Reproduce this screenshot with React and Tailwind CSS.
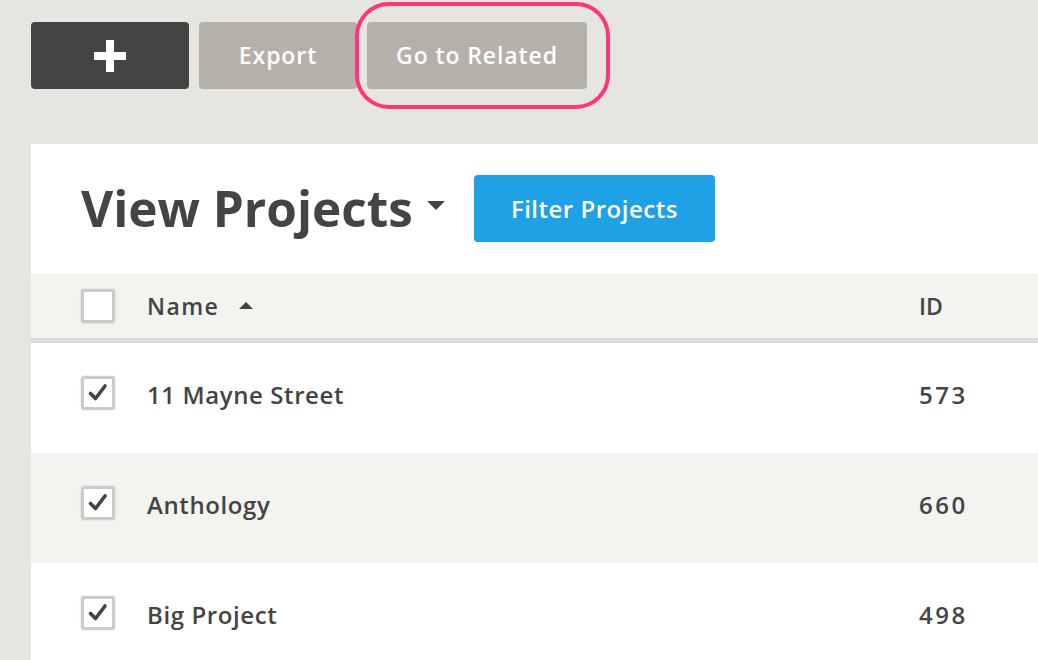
import React from "react";

function Check() {
  return (
    <svg width="24" height="24" viewBox="0 0 24 24" className="block">
      <path d="M4.5 12.5 L9.5 17.5 L19 5" fill="none" stroke="#444" strokeWidth="3.6" strokeLinecap="round" strokeLinejoin="round" />
    </svg>
  );
}

function Box({ checked }) {
  return (
    <div className="w-[34px] h-[34px] rounded-[3px] border-[3px] border-[#cbcbc7] bg-white flex items-center justify-center shadow-[0_0_2px_rgba(0,0,0,0.18)]">
      {checked && <Check />}
    </div>
  );
}

const rows = [
  { name: "11 Mayne Street", id: "573", bg: "bg-white" },
  { name: "Anthology", id: "660", bg: "bg-[#f3f3ef]" },
  { name: "Big Project", id: "498", bg: "bg-white" },
];

export default function App() {
  return (
    <div className="w-[1038px] h-[660px] overflow-hidden bg-[#e6e6e1] flex flex-col font-['Open_Sans',sans-serif] text-[#444444]">
      <div className="flex gap-[10px] pl-[31px] pt-[22px]">
        <button className="w-[158px] h-[67px] rounded-[4px] bg-[#444444] flex items-center justify-center">
          <svg width="32" height="32" viewBox="0 0 32 32">
            <rect x="12" y="0" width="8" height="32" fill="#fff" />
            <rect x="0" y="12" width="32" height="8" fill="#fff" />
          </svg>
        </button>
        <button className="w-[158px] h-[67px] rounded-[4px] bg-[#b5b1aa] text-white text-[23px] font-semibold tracking-[0.9px]">
          Export
        </button>
        <div className="relative">
          <button className="w-[220px] h-[67px] rounded-[4px] bg-[#b5b1aa] text-white text-[23px] font-semibold tracking-[0.9px]">
            Go to Related
          </button>
          <div className="absolute left-[-12px] top-[-20px] w-[255px] h-[107px] rounded-[34px] border-[4px] border-[#ff3574]"></div>
        </div>
      </div>

      <div className="ml-[31px] mt-[55px] flex-1 bg-white flex flex-col">
        <div className="flex items-center pl-[50px] pt-[31px] h-[98px]">
          <h1 className="text-[49.5px] font-bold leading-[67px] tracking-[0px]">View Projects</h1>
          <svg width="18" height="10" viewBox="0 0 18 10" className="ml-[14px] mt-[-6px]">
            <path d="M0 0 L18 0 L9 9 Z" fill="#444" />
          </svg>
          <button className="ml-[29px] w-[241px] h-[67px] rounded-[4px] bg-[#1fa1e5] text-white text-[24px] font-semibold tracking-[0.5px]">
            Filter Projects
          </button>
        </div>

        <div className="mt-[32px] h-[64px] bg-[#f3f3ef] flex items-center pl-[50px] border-b-[5px] border-[#dcdbd5] box-content">
          <Box />
          <span className="ml-[32px] text-[23px] font-semibold tracking-[1.4px]">Name</span>
          <svg width="14" height="8" viewBox="0 0 14 8" className="ml-[20px]">
            <path d="M0 7 L14 7 L7 0 Z" fill="#444" />
          </svg>
          <span className="ml-auto w-[119px] text-[23px] font-semibold">ID</span>
        </div>

        {rows.map((r) => (
          <div key={r.id} className={`h-[110px] shrink-0 flex items-center pl-[50px] ${r.bg}`}>
            <div className="mt-[-10px]">
              <Box checked />
            </div>
            <span className="ml-[32px] mt-[-6px] text-[24px] font-semibold tracking-[0.6px]">{r.name}</span>
            <span className="ml-auto mt-[-6px] w-[119px] text-[24px] font-semibold tracking-[2.5px]">{r.id}</span>
          </div>
        ))}
      </div>
    </div>
  );
}
